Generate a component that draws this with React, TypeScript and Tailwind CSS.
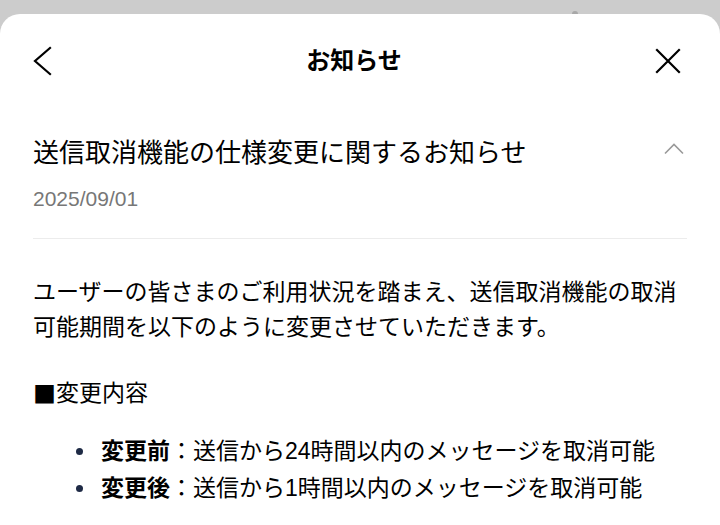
import React from "react";

const font = { fontFamily: '"Liberation Sans", "Noto Sans CJK JP", sans-serif' };

export default function App() {
  return (
    <div className="relative w-[720px] h-[525px] overflow-hidden bg-[#cccccc] pt-[14px]" style={font}>
      <div className="absolute left-[572px] top-[11px] w-[6px] h-[4px] rounded-t-full bg-[#a8a8a8]" />
      <div className="relative h-full bg-white rounded-t-[20px] text-black">
        <div className="flex items-center justify-between h-[93px] pl-[33px] pr-[39px]">
          <svg width="20" height="30" viewBox="0 0 20 30" fill="none" stroke="#000" strokeWidth="2.2" strokeLinecap="square">
            <path d="M17 2 L2 15 L17 28" />
          </svg>
          <div className="text-[24px] font-bold leading-none">お知らせ</div>
          <svg width="26" height="26" viewBox="0 0 26 26" fill="none" stroke="#000" strokeWidth="2.2" strokeLinecap="square">
            <path d="M2 2 L24 24 M24 2 L2 24" />
          </svg>
        </div>
        <div className="px-[33px]">
          <div className="pt-[28px] pb-[25px] border-b border-[#ececec]">
            <div className="flex items-start justify-between">
              <h1 className="text-[26px] leading-[36px] font-normal">送信取消機能の仕様変更に関するお知らせ</h1>
              <svg className="mt-[8px] mr-[3px]" width="20" height="12" viewBox="0 0 20 12" fill="none" stroke="#9a9a9a" strokeWidth="1.6">
                <path d="M1 10.5 L10 1.5 L19 10.5" />
              </svg>
            </div>
            <div className="mt-[14px] text-[21px] leading-[28px] text-[#777777]">2025/09/01</div>
          </div>
          <p className="mt-[36px] text-[23px] leading-[35px]">
            ユーザーの皆さまのご利用状況を踏まえ、送信取消機能の取消可能期間を以下のように変更させていただきます。
          </p>
          <p className="mt-[31px] flex items-center h-[35px] text-[23px] leading-[35px]">
            <span className="font-['Noto_Sans_CJK_JP'] leading-none">■</span>
            <span>変更内容</span>
          </p>
          <ul className="mt-[22px] text-[23px] leading-[37px]">
            <li className="flex items-center">
              <span className="ml-[43px] mr-[18px] w-[7px] h-[7px] rounded-full bg-[#1e2a45]" />
              <span>
                <b className="font-bold">変更前</b>：送信から24時間以内のメッセージを取消可能
              </span>
            </li>
            <li className="flex items-center">
              <span className="ml-[43px] mr-[18px] w-[7px] h-[7px] rounded-full bg-[#1e2a45]" />
              <span>
                <b className="font-bold">変更後</b>：送信から1時間以内のメッセージを取消可能
              </span>
            </li>
          </ul>
        </div>
      </div>
    </div>
  );
}
